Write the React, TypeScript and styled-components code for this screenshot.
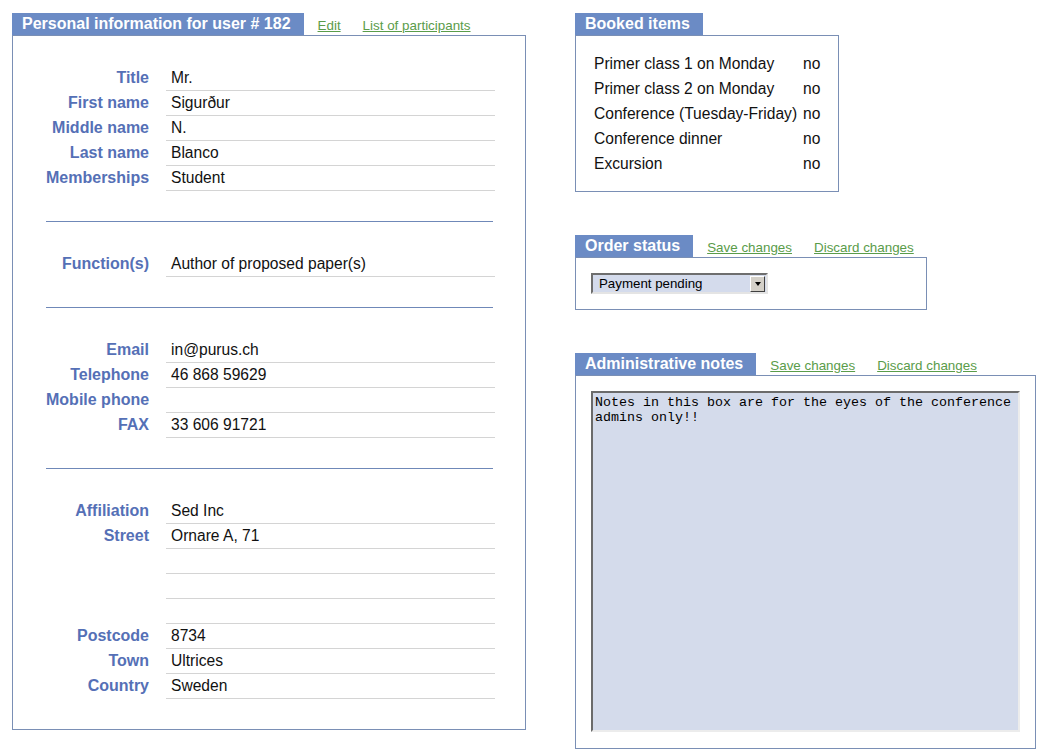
import styled, { createGlobalStyle } from 'styled-components'
import { Fragment } from 'react'

const GlobalStyle = createGlobalStyle`
    body {
        margin: 0;
        background: #fff;
        font-family: "Liberation Sans", Arial, sans-serif;
    }
`

type field = [string, string]

const personal: field[] = [
    ['Title', 'Mr.'],
    ['First name', 'Sigurður'],
    ['Middle name', 'N.'],
    ['Last name', 'Blanco'],
    ['Memberships', 'Student'],
]

const functions: field[] = [['Function(s)', 'Author of proposed paper(s)']]

const contact: field[] = [
    ['Email', 'in@purus.ch'],
    ['Telephone', '46 868 59629'],
    ['Mobile phone', ''],
    ['FAX', '33 606 91721'],
]

const address: field[] = [
    ['Affiliation', 'Sed Inc'],
    ['Street', 'Ornare A, 71'],
    ['', ''],
    ['', ''],
    ['', ''],
    ['Postcode', '8734'],
    ['Town', 'Ultrices'],
    ['Country', 'Sweden'],
]

const booked: field[] = [
    ['Primer class 1 on Monday', 'no'],
    ['Primer class 2 on Monday', 'no'],
    ['Conference (Tuesday-Friday)', 'no'],
    ['Conference dinner', 'no'],
    ['Excursion', 'no'],
]

const Page = styled.div`
    display: flex;
    align-items: flex-start;
    gap: 49px;
    padding: 13px 12px;
`

const Column = styled.div`
    display: flex;
    flex-direction: column;
    gap: 43px;
`

const Panel = styled.section<{ $width: number }>`
    width: ${p => p.$width}px;
`

const Header = styled.div`
    display: flex;
    align-items: center;
    height: 22px;
`

const Tab = styled.h2`
    margin: 0;
    padding: 0 13px 0 10px;
    height: 22px;
    line-height: 22px;
    background: #6b8bc5;
    color: #fff;
    font-size: 16px;
    font-weight: bold;
    white-space: nowrap;
`

const Links = styled.div`
    display: flex;
    gap: 22px;
    margin-left: 14px;
    padding-top: 3px;
`

const Link = styled.a`
    color: #5a9c4a;
    font-size: 13.4px;
    text-decoration: underline;
    white-space: nowrap;
    cursor: pointer;
`

const Box = styled.div<{ $pad: string }>`
    border: 1px solid #7a8fb5;
    padding: ${p => p.$pad};
`

const Fields = styled.div`
    display: grid;
    grid-template-columns: 120px 329px;
`

const Label = styled.div`
    text-align: right;
    padding-right: 17px;
    line-height: 24px;
    height: 25px;
    font-size: 16px;
    color: #5570b6;
    font-weight: bold;
    white-space: nowrap;
`

const Value = styled.div`
    height: 24px;
    line-height: 24px;
    padding-left: 5px;
    border-bottom: 1px solid #d4d4d4;
    font-size: 15.6px;
    color: #111;
`

const Rule = styled.hr`
    width: 447px;
    margin: 30px 0;
    border: 0;
    border-top: 1px solid #6f88b8;
`

const Items = styled.div`
    display: grid;
    grid-template-columns: auto auto;
    justify-content: space-between;
    column-gap: 6px;
    font-size: 15.6px;
    line-height: 25px;
    color: #111;
    white-space: nowrap;
`

const SelectBox = styled.div`
    display: flex;
    align-items: center;
    width: 177px;
    height: 21px;
    box-sizing: border-box;
    border: 2px solid;
    border-color: #6e6e6e #e4e4e4 #e4e4e4 #6e6e6e;
    background: #d4dbec;
    font-size: 13.3px;
    color: #000;
`

const SelectText = styled.span`
    flex: 1;
    padding-left: 6px;
`

const ArrowButton = styled.span`
    display: flex;
    align-items: center;
    justify-content: center;
    width: 13px;
    height: 14px;
    margin-right: 1px;
    background: #d4d0c8;
    border: 1px solid;
    border-color: #fff #404040 #404040 #fff;

    &::after {
        content: "";
        border-left: 3.5px solid transparent;
        border-right: 3.5px solid transparent;
        border-top: 4px solid #000;
    }
`

const Notes = styled.textarea`
    display: block;
    width: 429px;
    height: 341px;
    box-sizing: border-box;
    margin: 0;
    padding: 2px 2px;
    border: 2px solid;
    border-color: #6b6b6b #ececec #ececec #6b6b6b;
    background: #d4dbeb;
    font-family: "Liberation Mono", "Courier New", monospace;
    font-size: 13.33px;
    line-height: 15px;
    color: #000;
    resize: none;
    outline: none;
`

function FieldGroup({ rows }: { rows: field[] }) {
    return (
        <Fields>
            {rows.map(([label, value], i) => (
                <Fragment key={i}>
                    <Label>{label}</Label>
                    <Value>{value}</Value>
                </Fragment>
            ))}
        </Fields>
    )
}

function PanelHeader({ title, links }: { title: string; links: string[] }) {
    return (
        <Header>
            <Tab>{title}</Tab>
            {links.length > 0 && (
                <Links>
                    {links.map(l => <Link key={l}>{l}</Link>)}
                </Links>
            )}
        </Header>
    )
}

export default function App() {
    return (
        <>
            <GlobalStyle />
            <Page>
                <Panel $width={515}>
                    <PanelHeader title="Personal information for user # 182" links={['Edit', 'List of participants']} />
                    <Box $pad="30px 30px 30px 33px">
                        <FieldGroup rows={personal} />
                        <Rule />
                        <FieldGroup rows={functions} />
                        <Rule />
                        <FieldGroup rows={contact} />
                        <Rule />
                        <FieldGroup rows={address} />
                    </Box>
                </Panel>
                <Column>
                    <Panel $width={264}>
                        <PanelHeader title="Booked items" links={[]} />
                        <Box $pad="15px 18px 15px 18px">
                            <Items>
                                {booked.map(([item, state]) => (
                                    <Fragment key={item}>
                                        <span>{item}</span>
                                        <span>{state}</span>
                                    </Fragment>
                                ))}
                            </Items>
                        </Box>
                    </Panel>
                    <Panel $width={352}>
                        <PanelHeader title="Order status" links={['Save changes', 'Discard changes']} />
                        <Box $pad="15px 15px 15px 15px">
                            <SelectBox>
                                <SelectText>Payment pending</SelectText>
                                <ArrowButton />
                            </SelectBox>
                        </Box>
                    </Panel>
                    <Panel $width={461}>
                        <PanelHeader title="Administrative notes" links={['Save changes', 'Discard changes']} />
                        <Box $pad="15px 15px 16px 15px">
                            <Notes readOnly defaultValue="Notes in this box are for the eyes of the conference admins only!!" />
                        </Box>
                    </Panel>
                </Column>
            </Page>
        </>
    )
}
